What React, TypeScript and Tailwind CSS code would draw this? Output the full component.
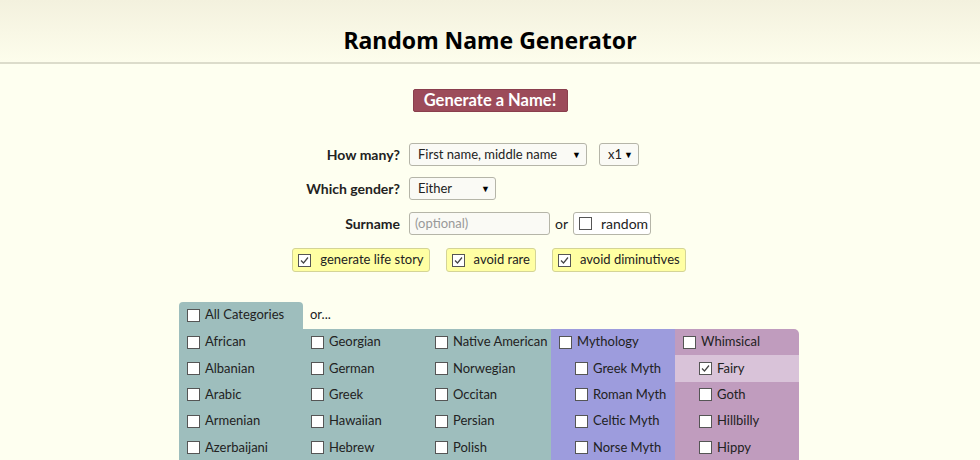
import React from 'react';

const Box = ({ checked = false }: { checked?: boolean }) => (
  <span className="inline-flex items-center justify-center w-[13px] h-[13px] bg-white border border-[#555] shrink-0">
    {checked && (
      <svg viewBox="0 0 11 11" className="w-[11px] h-[11px]">
        <path d="M2 5.5 L4.5 8 L9 2.5" fill="none" stroke="#444" strokeWidth="1.2" />
      </svg>
    )}
  </span>
);

const Select = ({ label, width }: { label: string; width: string }) => (
  <div className={`flex items-center justify-between h-[23px] pl-[8px] pr-[5px] border border-[#b5b5a8] rounded-[3px] bg-[#fafaf5] text-[13px] text-[#222] whitespace-nowrap ${width}`}>
    <span>{label}</span>
    <span className="text-[9px] text-black">▼</span>
  </div>
);

const Item = ({ label, checked = false, indent = false }: { label: string; checked?: boolean; indent?: boolean }) => (
  <div className={`flex items-center gap-[5px] h-[26.3px] whitespace-nowrap ${indent ? 'pl-[24px]' : 'pl-[8px]'}`}>
    <Box checked={checked} />
    <span>{label}</span>
  </div>
);

const App: React.FC = () => {
  const col1 = ['African', 'Albanian', 'Arabic', 'Armenian', 'Azerbaijani'];
  const col2 = ['Georgian', 'German', 'Greek', 'Hawaiian', 'Hebrew'];
  const col3 = ['Native American', 'Norwegian', 'Occitan', 'Persian', 'Polish'];
  const myth = ['Greek Myth', 'Roman Myth', 'Celtic Myth', 'Norse Myth'];
  const whim = ['Goth', 'Hillbilly', 'Hippy'];

  return (
    <div className="min-h-[460px] bg-[#fefff0] text-[#222]" style={{ fontFamily: 'Lato, "Noto Sans", sans-serif' }}>
      {/* Header */}
      <div className="h-[64px] bg-gradient-to-b from-[#f3f1de] to-[#fdfdec] border-b-2 border-[#dcdccb] flex justify-center pt-[24px]">
        <h1 className="text-[23px] leading-[32px] font-bold text-black" style={{ fontFamily: '"Noto Sans", sans-serif' }}>
          Random Name Generator
        </h1>
      </div>

      <div className="flex flex-col items-center">
        <button className="mt-[25px] h-[23px] w-[155px] bg-[#9c4b5a] border border-[#8a3f4d] rounded-[2px] text-white font-bold text-[16.5px] leading-[21px]">
          Generate a Name!
        </button>

        {/* Form */}
        <div className="mt-[31px] w-[980px] flex flex-col text-[13px]">
          <div className="flex items-center h-[23px]">
            <div className="w-[400px] text-right font-bold text-[14px]">How many?</div>
            <div className="ml-[9px] flex gap-[12px]">
              <Select label="First name, middle name" width="w-[178px]" />
              <Select label="x1" width="w-[40px]" />
            </div>
          </div>
          <div className="flex items-center h-[23px] mt-[11px]">
            <div className="w-[400px] text-right font-bold text-[14px]">Which gender?</div>
            <div className="ml-[9px]">
              <Select label="Either" width="w-[87px]" />
            </div>
          </div>
          <div className="flex items-center h-[23px] mt-[12px]">
            <div className="w-[400px] text-right font-bold text-[14px]">Surname</div>
            <div className="ml-[9px] flex items-center">
              <div className="w-[141px] h-[23px] px-[5px] flex items-center border border-[#b5b5a8] rounded-[3px] bg-[#fafaf5] text-[#999]">
                (optional)
              </div>
              <span className="ml-[5px] text-[14px]">or</span>
              <div className="ml-[5px] h-[23px] w-[78px] flex items-center gap-[9px] px-[5px] border border-[#b5b5a8] rounded-[3px] bg-white text-[14px]">
                <Box />
                <span>random</span>
              </div>
            </div>
          </div>
          <div className="flex justify-center gap-[16px] mt-[13px] ml-[-2px]">
            {['generate life story', 'avoid rare', 'avoid diminutives'].map((t) => (
              <div key={t} className="h-[24px] flex items-center gap-[9px] pl-[5px] pr-[5px] bg-[#ffffa3] border border-[#d4d496] rounded-[3px] whitespace-nowrap">
                <Box checked />
                <span>{t}</span>
              </div>
            ))}
          </div>
        </div>

        {/* Categories */}
        <div className="mt-[30px] w-[620px] ml-[-2px] text-[13px]">
          <div className="flex items-end h-[27px]">
            <div className="w-[124px] h-[27px] bg-[#9ebebd] rounded-t-[4px]">
              <Item label="All Categories" />
            </div>
            <span className="ml-[7px] mb-[5px]">or...</span>
          </div>
          <div className="flex">
            <div className="w-[372px] bg-[#9ebebd] grid grid-cols-3">
              {[col1, col2, col3].map((c, i) => (
                <div key={i}>
                  {c.map((l) => (
                    <Item key={l} label={l} />
                  ))}
                </div>
              ))}
            </div>
            <div className="w-[124px] bg-[#9d9cdd]">
              <Item label="Mythology" />
              {myth.map((l) => (
                <Item key={l} label={l} indent />
              ))}
            </div>
            <div className="w-[124px] bg-[#c09cbe] rounded-tr-[5px]">
              <Item label="Whimsical" />
              <div className="bg-[#d9c3d9]">
                <Item label="Fairy" checked indent />
              </div>
              {whim.map((l) => (
                <Item key={l} label={l} indent />
              ))}
            </div>
          </div>
        </div>
      </div>
    </div>
  );
};

export default App;
